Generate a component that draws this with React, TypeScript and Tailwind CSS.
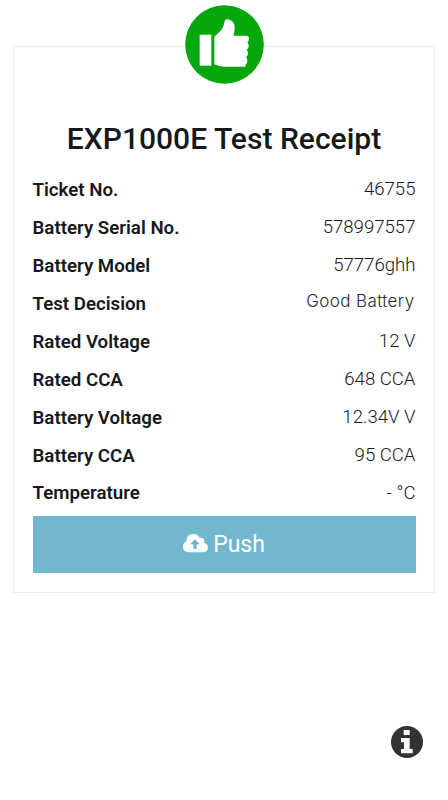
import React from "react";

type Row = { label: string; value: string; alt?: boolean };

const rows: Row[] = [
  { label: "Ticket No.", value: "46755" },
  { label: "Battery Serial No.", value: "578997557" },
  { label: "Battery Model", value: "57776ghh" },
  { label: "Test Decision", value: "Good Battery", alt: true },
  { label: "Rated Voltage", value: "12 V" },
  { label: "Rated CCA", value: "648 CCA" },
  { label: "Battery Voltage", value: "12.34V V" },
  { label: "Battery CCA", value: "95 CCA" },
  { label: "Temperature", value: "- °C" },
];

function ThumbBadge() {
  return (
    <svg viewBox="0 0 237 237" className="absolute -top-[42px] left-[171px] h-[79px] w-[79px]">
      <circle cx="118.500" cy="118.500" r="118" fill="#05a80c" />
      <path fill="#fff" d="M44 89h35v93H44z" />
      <path
        fill="#fff"
        d="M88 95L109 75Q115 67 118 54Q119 43 126 43Q134 43 141 49Q149 55 149 68Q149 79 145 92H184Q192 93 192 101Q192 108 187 112Q192 117 191 125Q190 131 185 134Q190 139 189 147Q188 153 183 156Q188 161 187 169Q186 176 182 179Q184 185 177 185H117Q103 185 88 178Z"
      />
    </svg>
  );
}

function CloudUpload() {
  return (
    <svg viewBox="0 0 75 56" className="mb-[3px] h-[18.700px] w-[25px]" fill="currentColor">
      <path
        fillRule="evenodd"
        d="M17 55Q0 53 0 38Q0 27 10 22Q10 0 31 0Q45 0 50 12Q62 8 64 20Q64 23 63 26Q75 29 75 40Q75 54 60 55ZM36 16L21 31H31V45H41V31H51Z"
      />
    </svg>
  );
}

function InfoIcon() {
  return (
    <svg viewBox="0 0 96 96" className="mt-[132.500px] ml-[391px] h-[32px] w-[32px]">
      <circle cx="48" cy="48" r="48" fill="#333333" />
      <path fill="#fff" d="M38 12h18v15H38zM30 36h26v33h9v13H30V69h9V49h-9z" />
    </svg>
  );
}

export default function App() {
  return (
    <div className="flex h-[800px] w-[448px] flex-col bg-white pt-[46px] font-['Roboto',sans-serif] text-[#16181c]">
      <main className="relative ml-[13px] h-[547px] w-[422px] border border-[#eeeeee] pr-[18.500px] pl-[18.500px] pt-[70px]">
        <ThumbBadge />
        <h1 className="h-[53px] text-center text-[30.050px] leading-[44px] font-medium whitespace-nowrap">EXP1000E Test Receipt</h1>
        <dl>
          {rows.map((row) => (
            <div key={row.label} className="flex h-[37.950px] items-center justify-between pt-[2px] whitespace-nowrap">
              <dt className="text-[18.700px] font-semibold">{row.label}</dt>
              {row.alt ? (
                <dd className="pr-[1px] pb-[4px] font-['Inter',sans-serif] text-[17px] font-light tracking-[0.400px] text-[#2b2b2b]">{row.value}</dd>
              ) : (
                <dd className="text-[18.600px] font-light">{row.value}</dd>
              )}
            </div>
          ))}
        </dl>
        <button className="mt-[5px] flex h-[57px] w-full items-center justify-center gap-[5px] bg-[#72b7d0] text-[23px] text-white">
          <CloudUpload />
          <span className="leading-none">Push</span>
        </button>
      </main>
      <InfoIcon />
    </div>
  );
}
